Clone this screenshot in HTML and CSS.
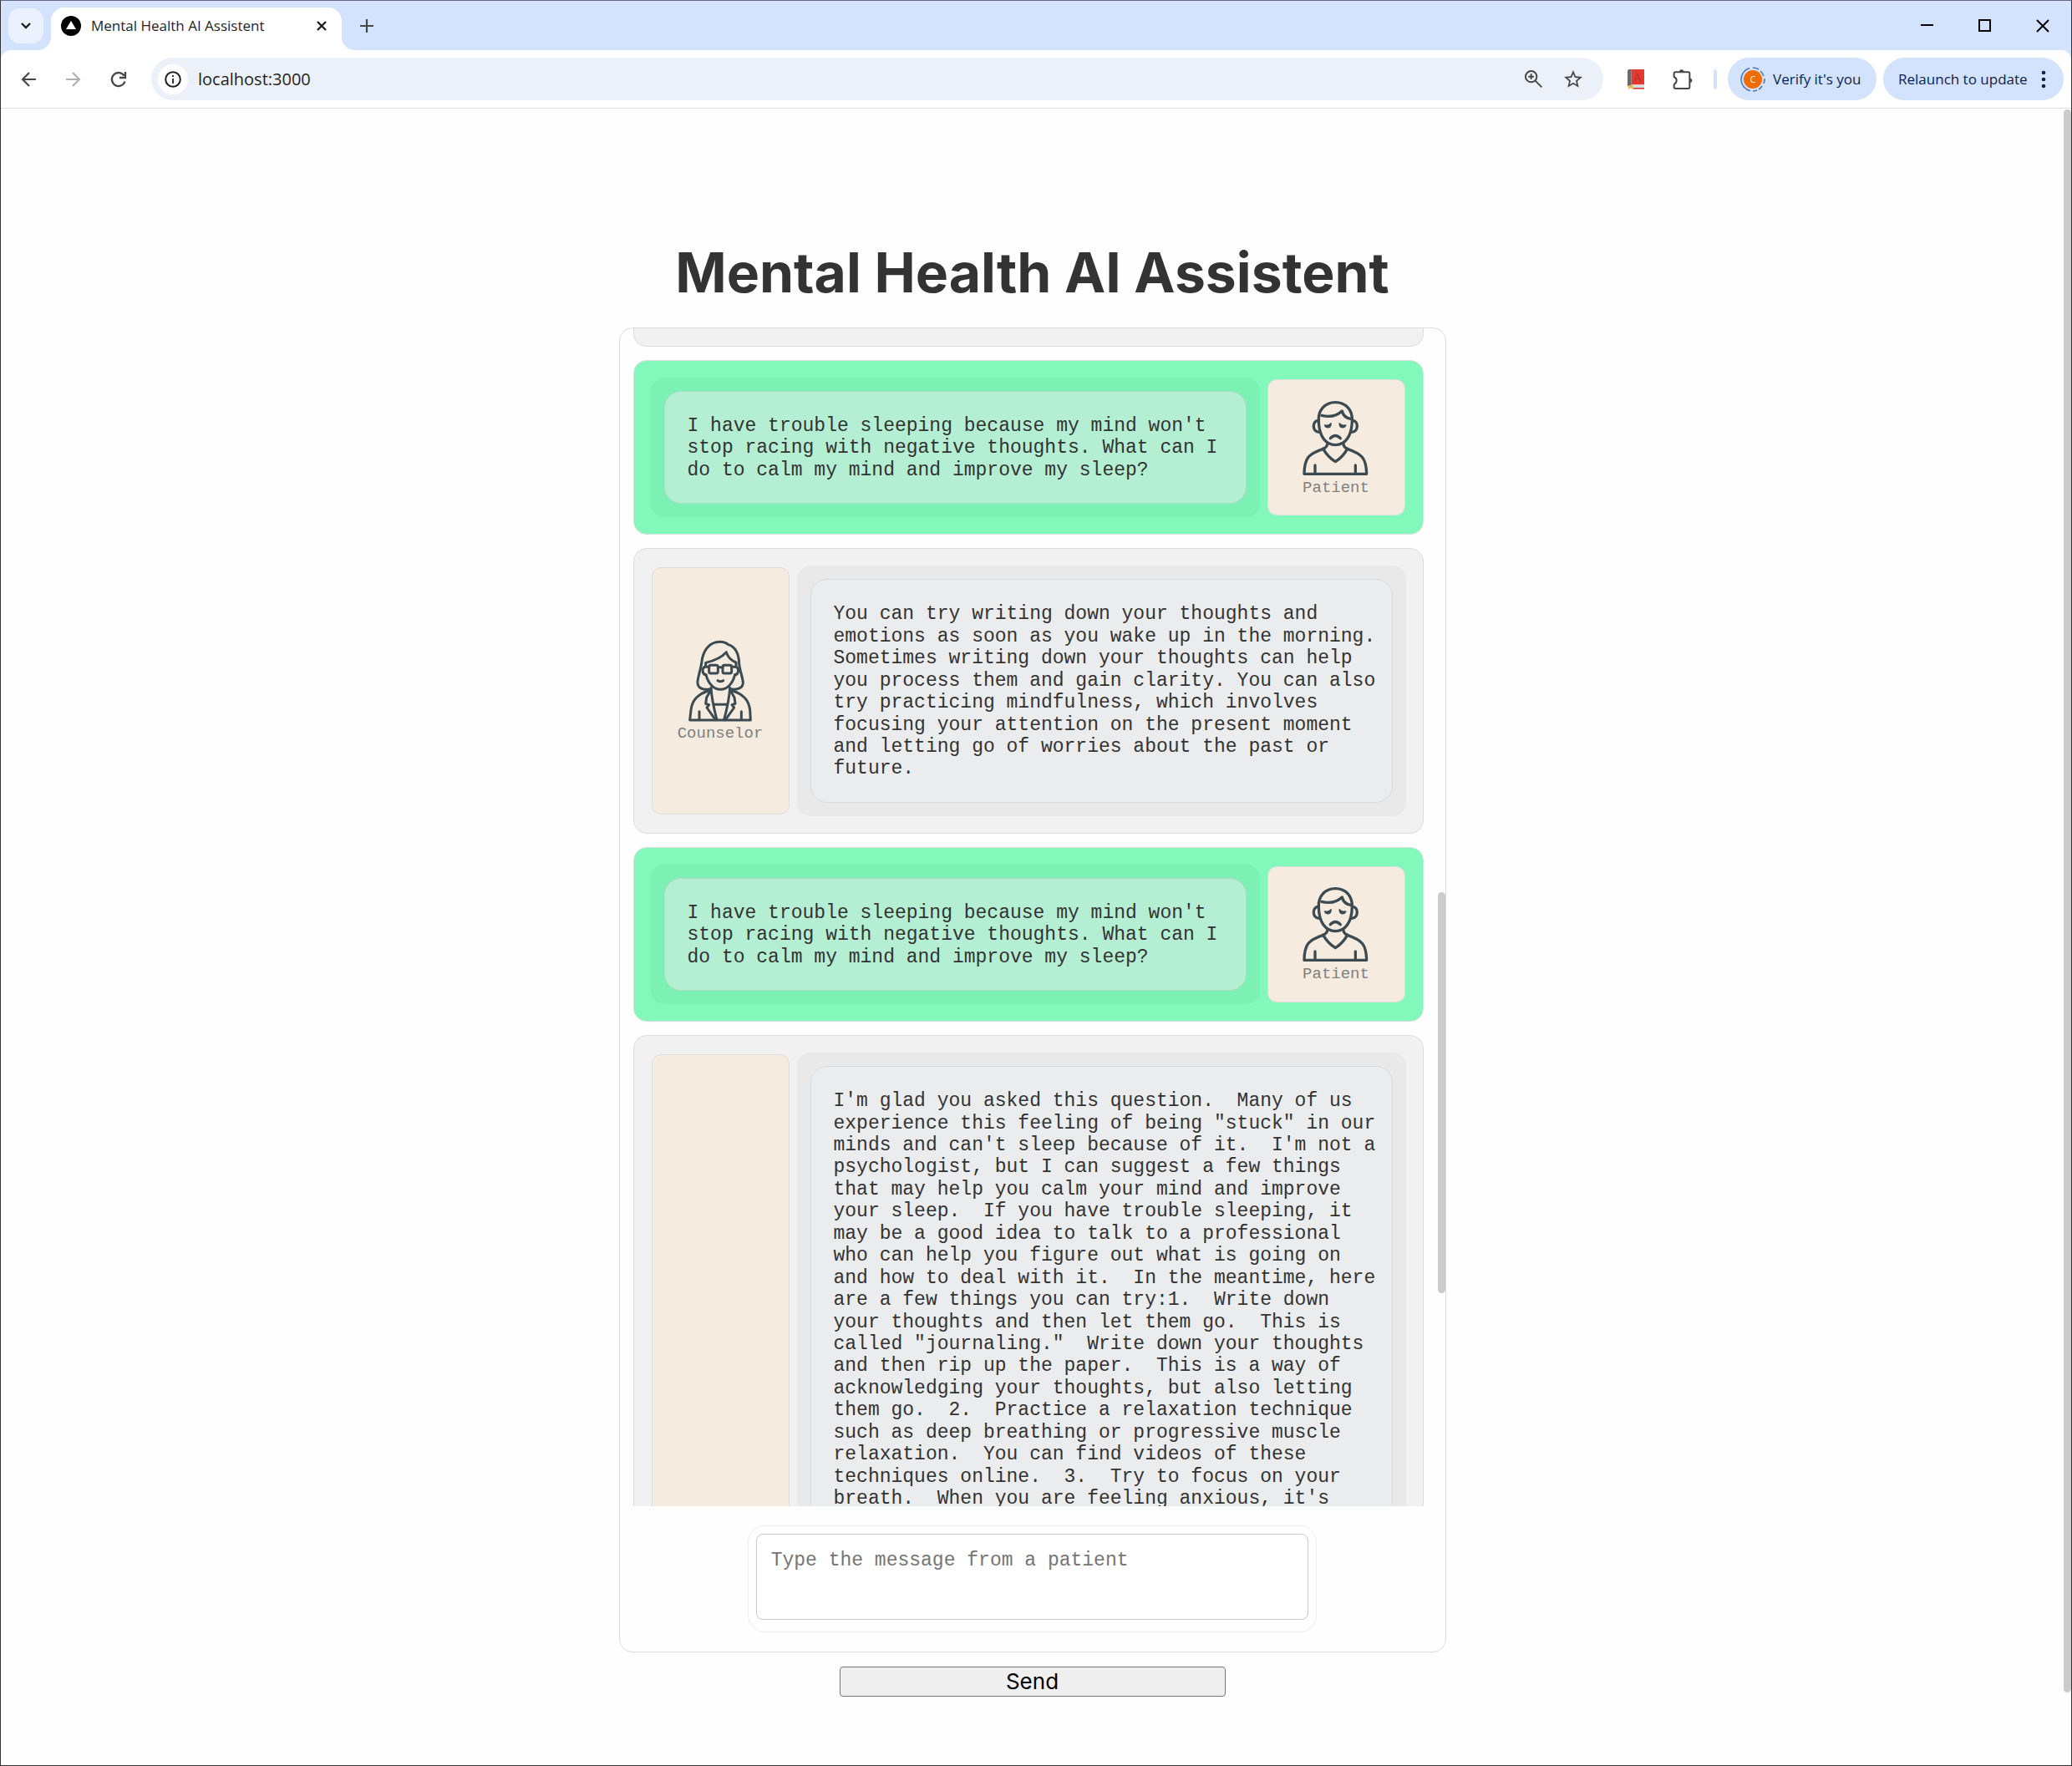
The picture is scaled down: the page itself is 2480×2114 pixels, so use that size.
FILE: index.html
```html
<!DOCTYPE html>
<html lang="en">
<head>
<meta charset="utf-8">
<title>Mental Health AI Assistent</title>
<link rel="stylesheet" href="styles.css">
</head>
<body>
<svg class="sprite" aria-hidden="true">
  <symbol id="patient" viewBox="988 588 240 288">
    <g fill="none" stroke="#3c4b52" stroke-width="10" stroke-linecap="round" stroke-linejoin="round">
      <path d="M1106 602C1068 602 1044 630 1046 668C1047 725 1072 755 1106 755C1140 755 1165 725 1166 668C1168 630 1144 602 1106 602Z"/>
      <path d="M1057 649C1085 656 1112 650 1130 633C1134 650 1148 660 1164 662"/>
      <path d="M1044 667C1022 668 1022 708 1048 709M1168 667C1190 668 1190 708 1164 709"/>
      <path d="M1088 731Q1106 712 1124 731"/>
      <path d="M1077 752Q1076 763 1062 769M1135 752Q1136 763 1149 769"/>
      <path d="M1062 769Q1080 799 1106 815Q1132 799 1149 769"/>
      <path d="M1062 769C1010 787 995 800 994 859H1218C1217 800 1200 787 1149 769"/>
      <path d="M1033 828V856M1178 828V856"/>
    </g>
    <path fill="#3c4b52" stroke="#3c4b52" stroke-width="5" stroke-linejoin="round" d="M1068 684Q1082 688 1090 678Q1090 691 1080 692Q1071 692 1068 684ZM1143 684Q1129 688 1121 678Q1121 691 1131 692Q1140 692 1143 684Z"/>
  </symbol>
  <symbol id="counselor" viewBox="23 30 240 306">
    <g fill="none" stroke="#3c4b52" stroke-width="9" stroke-linecap="round" stroke-linejoin="round">
      <path d="M110 209C80 215 60 206 62 182C64 165 72 140 76 118C80 70 105 40 142 40C155 40 165 44 172 50C198 58 210 85 211 118C214 145 223 165 225 185C226 206 205 214 178 209"/>
      <path d="M91 124V115C120 108 147 97 165 77C170 95 185 108 200 114V124"/>
      <path d="M88 130C76 134 78 158 92 158M200 130C212 134 210 158 196 158"/>
      <path d="M92 158C100 190 120 211 144 211C168 211 188 190 196 158"/>
      <rect x="103" y="124" width="32" height="29" rx="6"/>
      <rect x="152" y="124" width="32" height="29" rx="6"/>
      <path d="M135 131H152M86 130H103M184 130H202"/>
      <path d="M134 179Q144 185 154 179"/>
      <path d="M110 205C112 240 122 285 131 320M178 205C176 240 166 285 157 320"/>
      <path d="M122 265H166"/>
      <path d="M108 215L94 240L91 262L103 266L95 276L126 320M180 215L194 240L197 262L185 266L193 276L162 320"/>
      <path d="M108 213C60 228 42 250 38 285L34 321H252L250 285C246 250 228 228 180 213"/>
      <path d="M68 290V318M219 290V318"/>
    </g>
  </symbol>
</svg>

<div class="window">
  <header class="tabstrip">
    <button class="tab-search" aria-label="Search tabs">
      <svg width="14" height="14" viewBox="0 0 14 14"><path d="M2 4l5 5 5-5" fill="none" stroke="#1f1f1f" stroke-width="2.4"/></svg>
    </button>
    <div class="tab">
      <svg width="24" height="24" viewBox="0 0 24 24"><circle cx="12" cy="12" r="12"/><path d="M12 6l6 10H6z" fill="#fff"/></svg>
      <span class="tab-title">Mental Health AI Assistent</span>
      <button class="icon-button" aria-label="Close tab">
        <svg width="14" height="14" viewBox="0 0 14 14"><path d="M2 2l10 10M12 2L2 12" stroke="#1f1f1f" stroke-width="2.4"/></svg>
      </button>
    </div>
    <button class="icon-button" aria-label="New tab">
      <svg width="16" height="16" viewBox="0 0 16 16"><path d="M8 0v16M0 8h16" stroke="#474747" stroke-width="2.2"/></svg>
    </button>
    <div class="window-controls">
      <button class="icon-button" aria-label="Minimize"><svg width="16" height="16" viewBox="0 0 16 16"><path d="M0 7h15" stroke="#000" stroke-width="2"/></svg></button>
      <button class="icon-button" aria-label="Maximize"><svg width="16" height="16" viewBox="0 0 16 16"><path d="M1 1h13v13H1z" fill="none" stroke="#000" stroke-width="2"/></svg></button>
      <button class="icon-button" aria-label="Close"><svg width="16" height="16" viewBox="0 0 16 16"><path d="M1 1l14 14M15 1L1 15" stroke="#000" stroke-width="2"/></svg></button>
    </div>
  </header>

  <div class="toolbar-back">
    <div class="toolbar">
      <div class="nav">
        <button class="icon-button" aria-label="Back"><svg width="24" height="24" viewBox="0 0 24 24"><path d="M21 12H5M13 4l-8 8 8 8" fill="none" stroke="#474747" stroke-width="2.2"/></svg></button>
        <button class="icon-button" aria-label="Forward"><svg width="24" height="24" viewBox="0 0 24 24"><path d="M3 12h16M11 4l8 8-8 8" fill="none" stroke="#b0b0b0" stroke-width="2.2"/></svg></button>
        <button class="icon-button" aria-label="Reload"><svg width="24" height="24" viewBox="0 0 24 24"><path d="M19.500 14.500A8 8 0 1 1 18.500 7.500M20 3v7h-7" fill="none" stroke="#474747" stroke-width="2.3"/></svg></button>
      </div>
      <div class="omnibox">
        <button class="site-info" aria-label="View site information">
          <svg width="20" height="20" viewBox="0 0 20 20"><circle cx="10" cy="10" r="8.800" fill="none" stroke="#1f1f1f" stroke-width="2"/><path d="M10 9v6M10 5v2" stroke="#1f1f1f" stroke-width="1.800"/></svg>
        </button>
        <input class="url" type="text" value="localhost:3000" aria-label="Address and search bar">
        <button class="icon-button" aria-label="Zoom"><svg width="24" height="24" viewBox="0 0 72 72"><g fill="none" stroke="#474747" stroke-width="6"><circle cx="26" cy="26" r="20"/><path d="M40 40l24 24M26 16v20M16 26h20"/></g></svg></button>
        <button class="icon-button" aria-label="Bookmark this tab"><svg width="24" height="24" viewBox="1 1 22 22"><path fill="#474747" d="M22 9.240l-7.190-.62L12 2 9.190 8.630 2 9.240l5.460 4.730L5.820 21 12 17.270 18.180 21l-1.630-7.030L22 9.240zM12 15.400l-3.760 2.270 1-4.280-3.320-2.880 4.380-.38L12 6.100l1.710 4.040 4.380.38-3.320 2.880 1 4.280L12 15.400z"/></svg></button>
      </div>
      <div class="extensions">
        <button class="icon-button" aria-label="Dictionary">
          <svg width="20" height="24" viewBox="0 0 60 72"><path fill="#6b6b6b" d="M4 0h10v60H0V5z"/><path fill="#e53a32" d="M14 0h46v55H14z"/><path fill="#cfe0e6" d="M4 58h56v8H8z"/><path fill="#e53a32" d="M20 66h40v5H20z"/><path fill="none" stroke="#c4302b" stroke-width="4" d="M25 44L36 17l12 27M29 35h15"/><path fill="#f2b824" d="M3 58h16v13l-8-5-8 5z"/></svg>
        </button>
        <button class="icon-button" aria-label="Extensions">
          <svg width="24" height="24" viewBox="0 0 72 72"><path fill="none" stroke="#474747" stroke-width="6" d="M5 15q0-5 5-5h46q5 0 5 5v49q0 5-5 5H10q-5 0-5-5V54q9-5 9-14T5 27z"/><path fill="#474747" d="M24 9a8 8 0 0 1 16 0zM62 32a8 8 0 0 1 0 16z"/></svg>
        </button>
      </div>
      <div class="divider"></div>
      <button class="pill pill-profile">
        <svg width="30" height="30" viewBox="0 0 30 30"><circle cx="15" cy="15" r="11" fill="#ef6c00"/><path d="M11 1.600A14 14 0 0 0 12 28.700M15 1a14 14 0 0 1 7 2M24 5a14 14 0 0 1 4 6M29 14a14 14 0 0 1-1 6M26 23a14 14 0 0 1-4 4M20 28a14 14 0 0 1-5 1" fill="none" stroke="#5478b0" stroke-width="1.600"/><text x="15" y="19" text-anchor="middle" class="initial">C</text></svg>
        <span>Verify it's you</span>
      </button>
      <button class="pill pill-update">
        <span>Relaunch to update</span>
        <svg width="6" height="24" viewBox="0 0 6 24" fill="#0b2350"><circle cx="3" cy="4" r="2.300"/><circle cx="3" cy="12" r="2.300"/><circle cx="3" cy="20" r="2.300"/></svg>
      </button>
    </div>
  </div>

  <div class="viewport">
    <main class="page">
      <h1 class="title">Mental Health AI Assistent</h1>
      <section class="chat">
        <div class="messages">
          <div class="message message-end"></div>

          <article class="message message-patient">
            <div class="speech"><p class="bubble">I have trouble sleeping because my mind won't stop racing with negative thoughts. What can I do to calm my mind and improve my sleep?</p></div>
            <div class="avatar"><svg width="80" height="96"><use href="#patient"/></svg><span class="role">Patient</span></div>
          </article>

          <article class="message">
            <div class="avatar"><svg width="80" height="102"><use href="#counselor"/></svg><span class="role">Counselor</span></div>
            <div class="speech"><p class="bubble">You can try writing down your thoughts and emotions as soon as you wake up in the morning. Sometimes writing down your thoughts can help you process them and gain clarity. You can also try practicing mindfulness, which involves focusing your attention on the present moment and letting go of worries about the past or future.</p></div>
          </article>

          <article class="message message-patient">
            <div class="speech"><p class="bubble">I have trouble sleeping because my mind won't stop racing with negative thoughts. What can I do to calm my mind and improve my sleep?</p></div>
            <div class="avatar"><svg width="80" height="96"><use href="#patient"/></svg><span class="role">Patient</span></div>
          </article>

          <article class="message">
            <div class="avatar"></div>
            <div class="speech"><p class="bubble">I'm glad you asked this question.  Many of us experience this feeling of being "stuck" in our minds and can't sleep because of it.  I'm not a psychologist, but I can suggest a few things that may help you calm your mind and improve your sleep.  If you have trouble sleeping, it may be a good idea to talk to a professional who can help you figure out what is going on and how to deal with it.  In the meantime, here are a few things you can try:1.  Write down your thoughts and then let them go.  This is called "journaling."  Write down your thoughts and then rip up the paper.  This is a way of acknowledging your thoughts, but also letting them go.  2.  Practice a relaxation technique such as deep breathing or progressive muscle relaxation.  You can find videos of these techniques online.  3.  Try to focus on your breath.  When you are feeling anxious, it's</p></div>
          </article>
        </div>
        <div class="chat-scroll"></div>
        <div class="composer">
          <textarea class="composer-input" placeholder="Type the message from a patient" aria-label="Message"></textarea>
        </div>
      </section>
      <button class="send">Send</button>
    </main>
    <div class="page-scroll"></div>
  </div>
</div>
</body>
</html>
```
FILE: styles.css
```css
* { box-sizing: border-box; }

body {
  margin: 0;
  background: #fefefe;
  font-family: "Open Sans", "Noto Sans", sans-serif;
  color: #1f1f1f;
}

button { font: inherit; color: inherit; border: 0; padding: 0; background: none; }
svg { display: block; }
.sprite { position: absolute; width: 0; height: 0; }
.icon-button { flex: none; }

.window {
  display: flex;
  flex-direction: column;
  height: 100vh;
  border: 1px solid #333;
  border-top-color: #66697c;
}

/* Tab strip */
.tabstrip {
  display: flex;
  align-items: center;
  height: 59px;
  padding: 0 26px 0 9px;
  background: #d3e2fd;
}
.tab-search {
  display: grid;
  place-items: center;
  width: 42px;
  height: 42px;
  margin-right: 9px;
  border-radius: 14px;
  background: #ebf2fe;
}
.tab {
  position: relative;
  display: flex;
  align-items: center;
  gap: 12px;
  align-self: flex-end;
  width: 348px;
  height: 51px;
  margin-right: 22px;
  padding: 0 17px 8px 12px;
  border-radius: 16px 16px 0 0;
  background: #fff;
}
.tab::before,
.tab::after {
  content: "";
  position: absolute;
  bottom: 0;
  width: 16px;
  height: 16px;
}
.tab::before { right: 100%; background: radial-gradient(circle at 0 0, transparent 16px, #fff 16px); }
.tab::after { left: 100%; background: radial-gradient(circle at 100% 0, transparent 16px, #fff 16px); }
.tab-title { flex: 1; font-size: 17px; white-space: nowrap; }
.window-controls { display: flex; gap: 53px; margin-left: auto; }

/* Toolbar */
.toolbar-back { background: #d3e2fd; }
.toolbar {
  display: flex;
  align-items: center;
  height: 70px;
  padding: 0 9px 0 21px;
  border-bottom: 1px solid #dedede;
  border-radius: 12px 12px 0 0;
  background: #fff;
}
.nav { display: flex; gap: 30px; margin-right: 27px; }
.omnibox {
  display: flex;
  flex: 1;
  align-items: center;
  gap: 23px;
  height: 51px;
  padding: 0 24px 0 8px;
  border-radius: 26px;
  background: #ecf0f9;
}
.site-info {
  display: grid;
  place-items: center;
  width: 36px;
  height: 36px;
  margin-right: -11px;
  border-radius: 50%;
  background: #fff;
}
.url {
  flex: 1;
  min-width: 0;
  padding: 0;
  border: 0;
  background: none;
  font: 20px "Open Sans", "Noto Sans", sans-serif;
  color: #1f1f1f;
}
.extensions { display: flex; gap: 34px; margin: 0 25px 0 29px; }
.divider { width: 4px; height: 24px; margin-right: 13px; border-radius: 2px; background: #d3e2fd; }
.pill {
  display: flex;
  align-items: center;
  height: 51px;
  border-radius: 26px;
  background: #d3e2fd;
  color: #0b2350;
  font-size: 17px;
  white-space: nowrap;
}
.pill-profile { gap: 9px; width: 178px; margin-right: 8px; padding-left: 15px; }
.pill-update { justify-content: space-between; width: 216px; padding: 0 21px 0 18px; }
.initial { font: 11px "Open Sans", sans-serif; fill: #fff; }

/* Page */
.viewport { display: flex; flex: 1; min-height: 0; }
.page {
  display: flex;
  flex: 1;
  flex-direction: column;
  align-items: center;
  padding: 156px 0 82px;
}
.page-scroll {
  width: 9px;
  margin: 1px 0 87px;
  border-radius: 5px;
  background: #cbcbcb;
}
.title {
  margin: 0 0 26px;
  font: 700 66px/80px Inter, sans-serif;
  color: #333;
}
.chat {
  position: relative;
  display: flex;
  flex: 1;
  flex-direction: column;
  align-items: center;
  width: 90%;
  max-width: 990px;
  min-height: 0;
  border: 1px solid #ddd;
  border-radius: 16px;
}
.messages {
  display: flex;
  flex: 1;
  flex-direction: column;
  gap: 16px;
  align-self: stretch;
  min-height: 0;
  padding: 0 26px 0 16px;
  overflow: hidden;
  font-family: "Liberation Mono", monospace;
}
.chat-scroll {
  position: absolute;
  top: 675px;
  right: 0;
  width: 9px;
  height: 480px;
  border-radius: 5px;
  background: #cbcbcb;
}

.message {
  display: flex;
  flex: none;
  gap: 8px;
  padding: 20px;
  border: 1px solid #ddd;
  border-radius: 16px;
  background: #f1f1f1;
}
.message-patient { background: #82f9bb; }
.message-end { height: 22px; padding: 0; border-top: 0; border-radius: 0 0 16px 16px; }
.speech {
  flex: 1;
  padding: 16px;
  border-radius: 16px;
  background: #e9e9e9;
}
.message-patient .speech { background: #7df0b3; }
.bubble {
  margin: 0;
  padding: 28px 16px 26px 27px;
  border: 1px solid #d8dadc;
  border-radius: 20px;
  background: #ebecee;
  font-size: 23px;
  line-height: 1.15;
  color: #333;
  white-space: pre-wrap;
}
.message-patient .bubble { border-color: #b0dcc5; background: #b4efd3; }
.avatar {
  display: flex;
  flex: none;
  flex-direction: column;
  align-items: center;
  justify-content: center;
  width: 165px;
  margin: 2px 1px;
  border: 1px solid #ddd;
  border-radius: 11px;
  background: #f5ebdf;
}
.role { font-size: 19px; line-height: 22px; color: #808080; }

/* Message entry */
.composer {
  width: 69%;
  margin: 23px 0;
  padding: 9px;
  border: 1px solid #eee;
  border-radius: 20px;
}
.composer-input {
  display: block;
  width: 100%;
  height: 103px;
  margin-bottom: 5px;
  padding: 18px 17px;
  border: 1px solid #c8c8d0;
  border-radius: 8px;
  background: #fff;
  font: 23px "Liberation Mono", monospace;
  resize: none;
}
.composer-input::placeholder { color: #757575; }
.send {
  width: 462px;
  height: 36px;
  margin-top: 17px;
  border: 1px solid #767676;
  border-radius: 4px;
  background: #efefef;
  font: 26px/34px Inter, sans-serif;
  color: #000;
}
```
